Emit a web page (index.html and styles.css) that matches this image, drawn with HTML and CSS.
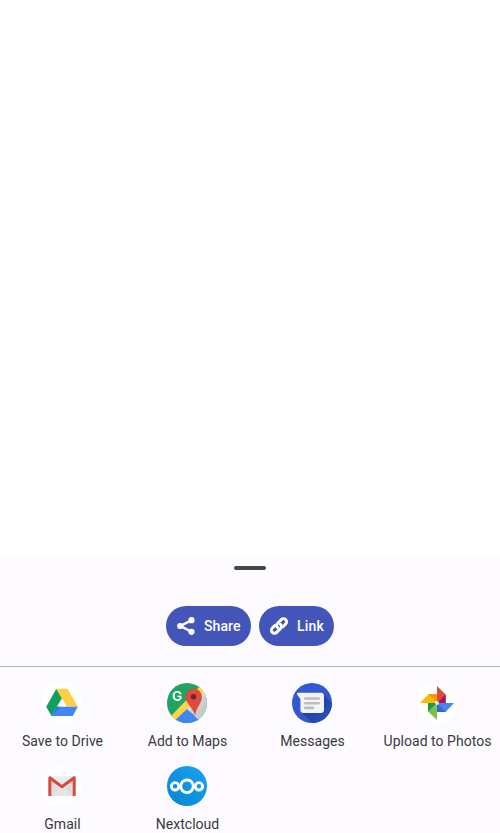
FILE: index.html
```html
<!DOCTYPE html>
<html lang="en">
<head>
<meta charset="utf-8">
<title>Share</title>
<link rel="stylesheet" href="styles.css">
</head>
<body>
<main class="sheet">
  <div class="handle"></div>
  <div class="actions">
    <button class="pill pill-share">
      <svg class="pill-icon" viewBox="0 0 18 18"><path d="M14.7 3.1 3.4 9l11.3 5.9" fill="none" stroke="#fff" stroke-width="2.4"/><g fill="#fff"><circle cx="3.2" cy="9" r="3.1"/><circle cx="14.5" cy="3.2" r="3.1"/><circle cx="14.5" cy="14.8" r="3.1"/></g></svg>
      <span>Share</span>
    </button>
    <button class="pill">
      <svg class="pill-icon" viewBox="0 0 18 18"><g fill="none" stroke="#fff" stroke-width="2.9" stroke-linecap="round"><path d="M7.6 10.7a3.1 3.1 0 0 1 0-4.4l3.7-3.7a3.1 3.1 0 0 1 4.4 4.4l-2.6 2.6"/><path d="M10.4 7.3a3.1 3.1 0 0 1 0 4.4l-3.7 3.7A3.1 3.1 0 0 1 2.3 11l2.6-2.6"/></g></svg>
      <span>Link</span>
    </button>
  </div>
  <div class="apps">
    <div class="app">
      <svg class="app-icon" viewBox="0 0 40 40"><circle cx="20" cy="20" r="20" fill="#fff"/><path d="M14.3 5.7 4.2 23.7 9.5 33 20 15z" fill="#11a05e"/><path d="M14.3 5.7h11.2l10.3 18H24.9z" fill="#ffce44"/><path d="M9.5 33h21.2l5.1-9.3H15z" fill="#4285f4"/><path d="M15 23.7 9.5 33l8.5-9.3z" fill="#3367d6"/></svg>
      <span>Save to Drive</span>
    </div>
    <div class="app">
      <svg class="app-icon" viewBox="0 0 40 40">
        <defs><clipPath id="map"><circle cx="20" cy="20" r="20"/></clipPath></defs>
        <g clip-path="url(#map)"><path d="M0 0h40v40H0z" fill="#1fa463"/><path d="M40 5v35H23z" fill="#c9cacb"/><path d="M3 37 34 4l7 7-35 34z" fill="#dedede"/><path d="M3 34 34 2l5 5L7 39z" fill="#ffd540"/><path d="m5 40 15-14 15 14z" fill="#4285f4"/><path d="m22 28 5 4 13-14V9z" fill="#cfd0d1"/><path d="M28 32.5C26 24 18.5 20.5 18.5 13.7a8.2 8.2 0 0 1 16.4 0c0 6.8-5.7 10.3-6.9 18.8z" fill="#dc4b3e"/><circle cx="26.5" cy="13.7" r="2.8" fill="#752622"/></g>
        <text class="map-letter" x="4.9" y="17.6">G</text>
      </svg>
      <span>Add to Maps</span>
    </div>
    <div class="app">
      <svg class="app-icon" viewBox="0 0 40 40">
        <defs><clipPath id="msg"><circle cx="20" cy="20" r="20"/></clipPath><linearGradient id="shade" gradientUnits="userSpaceOnUse" x1="20" y1="20" x2="34" y2="34"><stop offset="0" stop-color="#1f409c"/><stop offset="1" stop-color="#2a4dba"/></linearGradient></defs>
        <g clip-path="url(#msg)"><path d="M0 0h40v40H0z" fill="#3259cf"/><path d="m31 11 15 15v20H26L9 29z" fill="url(#shade)"/></g>
        <path d="M5.4 9.8h23.4a3.2 3.2 0 0 1 3.2 3.2v13.8a3.2 3.2 0 0 1-3.2 3.2H11.6a3.2 3.2 0 0 1-3.2-3.2V16L4.8 11z" fill="#f4f4f4"/>
        <path d="M13.2 15.5h13.6M13.2 20.3h13.6M13.2 24.9h7.8" stroke="#bdbdbd" stroke-width="2.6" stroke-linecap="round"/>
      </svg>
      <span>Messages</span>
    </div>
    <div class="app">
      <svg class="app-icon" viewBox="0 0 40 40"><circle cx="20" cy="20" r="20" fill="#fff"/><path d="M20 3v17h8.7v-8.5z" fill="#dd4b3e"/><path d="m28.7 11.5L20 20h8.7z" fill="#ad1457"/><path d="M37 20H20v9h8.5z" fill="#4285f4"/><path d="M20 20v9h8.5z" fill="#3367d6"/><path d="M20 37V20h-9v8.5z" fill="#7fbd4d"/><path d="M20 20h-9v8.5z" fill="#109d58"/><path d="M3 20h17v-9h-8.5z" fill="#fbbc05"/><path d="M20 20v-9h-8.5z" fill="#ff9800"/><circle cx="20" cy="20" r="2" fill="#fff" opacity=".8"/></svg>
      <span>Upload to Photos</span>
    </div>
    <div class="app">
      <svg class="app-icon" viewBox="0 0 40 40"><circle cx="20" cy="20" r="20" fill="#fff"/><path d="M7 10.3h26V30H7z" fill="#ececec"/><path d="M9.3 30 20 20.5 30.7 30z" fill="#e4e4e4"/><path d="M9.3 15v15l8-7.5zM30.7 15v15l-8-7.5z" fill="#dcdcdc"/><path d="M7.8 30V11.7L20 20.8l12.2-9.1V30" fill="none" stroke="#da483c" stroke-width="3" stroke-linejoin="round"/></svg>
      <span>Gmail</span>
    </div>
    <div class="app">
      <svg class="app-icon" viewBox="0 0 40 40"><defs><linearGradient id="cloud" x1="1" y1="0" x2="0" y2="1"><stop offset="0" stop-color="#18a5f4"/><stop offset="1" stop-color="#0983d0"/></linearGradient></defs><circle cx="20" cy="20" r="20" fill="url(#cloud)"/><g fill="none" stroke="#fff" stroke-width="2.9"><circle cx="20" cy="20.3" r="6.3"/><circle cx="8.1" cy="20.3" r="3.7"/><circle cx="31.9" cy="20.3" r="3.7"/></g></svg>
      <span>Nextcloud</span>
    </div>
  </div>
</main>
</body>
</html>
```

FILE: styles.css
```css
* {
  box-sizing: border-box;
}

body {
  margin: 0;
  height: 833px;
  display: flex;
  flex-direction: column;
  justify-content: flex-end;
  overflow: hidden;
  background: #fff;
  color: #39393d;
  font-family: Roboto, sans-serif;
  font-size: 14px;
}

.sheet {
  height: 279px;
  padding-top: 12px;
  background: #fdfbff;
}

.handle {
  width: 32px;
  height: 4px;
  margin: 0 auto 36px;
  border-radius: 2px;
  background: #45464f;
}

.actions {
  display: flex;
  justify-content: center;
  gap: 8px;
  padding-bottom: 20px;
  border-bottom: 1px solid #b0afb4;
}

.pill {
  display: flex;
  align-items: center;
  gap: 9px;
  height: 40px;
  padding: 0 10px 0 11px;
  border: 0;
  border-radius: 20px;
  background: #4355b9;
  color: #fff;
  font: 500 14px/20px Roboto, sans-serif;
  letter-spacing: 0.15px;
}

.pill-share {
  width: 85px;
  letter-spacing: 0.05px;
}

.pill-icon {
  flex: none;
  width: 18px;
  height: 18px;
}

.apps {
  display: grid;
  grid-template-columns: repeat(4, 125px);
  grid-auto-rows: 83px;
  padding-top: 16px;
}

.app {
  display: flex;
  flex-direction: column;
  align-items: center;
  gap: 8px;
  line-height: 20px;
  letter-spacing: 0.03px;
  white-space: nowrap;
}

.app-icon {
  width: 40px;
  height: 40px;
  margin-right: 1px;
}

.map-letter {
  fill: #fff;
  font: 600 13.5px Inter, sans-serif;
}
```
